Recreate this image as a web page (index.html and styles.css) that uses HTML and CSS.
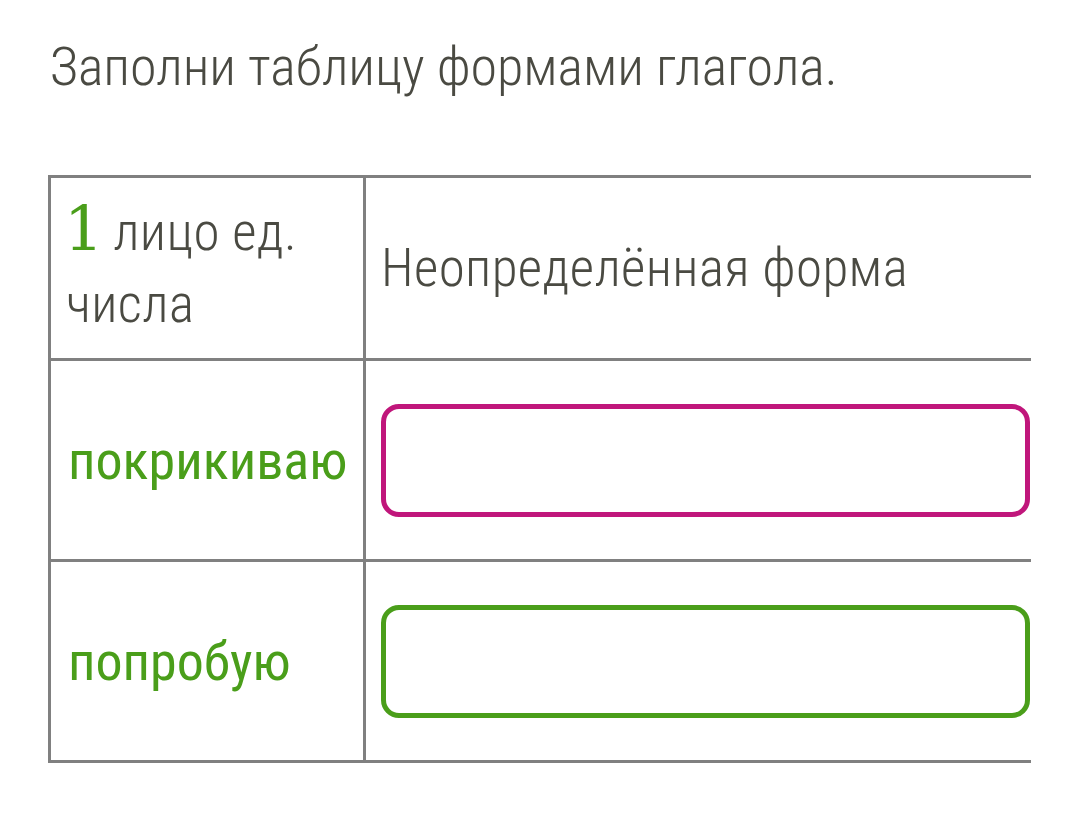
FILE: index.html
```html
<!DOCTYPE html>
<html lang="ru">
<head>
<meta charset="utf-8">
<link rel="stylesheet" href="styles.css">
</head>
<body>
<div class="page">
  <h1 class="title">Заполни таблицу формами глагола.</h1>
  <div class="table-wrap">
    <table class="verbs">
      <tr class="head-row">
        <td class="col-left head-cell"><span class="num">1</span> лицо ед. числа</td>
        <td class="col-right head-cell">Неопределённая форма</td>
      </tr>
      <tr class="answer-row">
        <td class="col-left word">покрикиваю</td>
        <td class="col-right"><div class="box box-wrong"></div></td>
      </tr>
      <tr class="answer-row">
        <td class="col-left word">попробую</td>
        <td class="col-right"><div class="box box-right"></div></td>
      </tr>
    </table>
  </div>
</div>
</body>
</html>
```
FILE: styles.css
```css
html, body {
  margin: 0;
  padding: 0;
  background: #ffffff;
}
.page {
  padding: 37px 0 0 48px;
  font-family: "Roboto Condensed", Roboto, "Liberation Sans", sans-serif;
  font-stretch: condensed;
  color: #4a4a42;
}
.title {
  margin: 0 0 0 2px;
  font-size: 54px;
  font-weight: 300;
  line-height: 60px;
  letter-spacing: -0.05px;
}
.table-wrap {
  margin-top: 78px;
  width: 983px;
  overflow: hidden;
}
.verbs {
  border-collapse: collapse;
  width: 1000px;
  border: 3px solid #808080;
}
.verbs td {
  border: 3px solid #808080;
  padding: 0;
  vertical-align: middle;
}
.col-left {
  width: 297px;
  padding-left: 15px !important;
}
.col-right {
  padding: 0 15px !important;
}
.head-row {
  height: 183px;
}
.answer-row {
  height: 201px;
}
.head-cell {
  font-size: 53px;
  font-weight: 300;
  line-height: 72px;
  letter-spacing: 0.4px;
}
.num {
  color: #4a9e1a;
  font-family: "DejaVu Serif", "Liberation Serif", serif;
  font-stretch: normal;
  font-size: 62px;
  line-height: 0;
  margin-left: -2px;
  margin-right: -3px;
}
.word {
  color: #4a9e1a;
  font-size: 54px;
  font-weight: 400;
  padding-left: 17px !important;
  width: 295px;
}
.box {
  height: 103px;
  border: 5px solid;
  border-radius: 18px;
}
.box-wrong {
  border-color: #c0167b;
}
.box-right {
  border-color: #4a9e1a;
}
```
